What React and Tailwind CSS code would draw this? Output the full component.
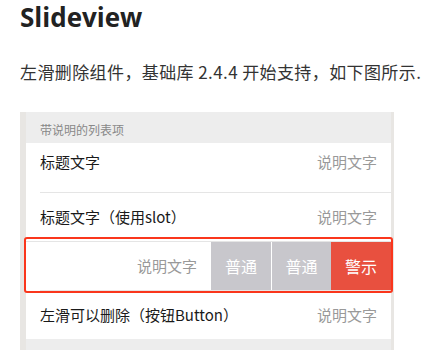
// App.jsx — Slideview doc snippet with a swiped list row
const CJK = "font-['Noto_Sans_CJK_SC','Noto_Sans',sans-serif]";

function Row({ title, desc, first = false }) {
  return (
    <div
      className={`flex h-[49px] items-center justify-between pr-[14px] ${
        first ? "pb-[11px] pl-[14px]" : "ml-[14px] border-t border-[#e5e5e5]"
      }`}
    >
      <span className="text-[15px] leading-[20px] text-[#1a1a1a]">{title}</span>
      <span className="text-[15px] leading-[20px] text-[#999]">{desc}</span>
    </div>
  );
}

function SwipedRow() {
  return (
    <div className="relative flex h-[49px] border-t border-[#e5e5e5]">
      <div className="flex flex-1 items-center justify-end pr-[14px]">
        <span className="text-[15px] leading-[20px] text-[#999]">说明文字</span>
      </div>
      <div className="flex h-full">
        <div className="flex w-[60px] items-center justify-center bg-[#c8c7cc] text-[16px] text-white">
          普通
        </div>
        <div className="ml-px flex w-[59px] items-center justify-center bg-[#c8c7cc] text-[16px] text-white">
          普通
        </div>
        <div className="flex w-[60px] items-center justify-center bg-[#e8503f] text-[16px] text-white">
          警示
        </div>
      </div>
      {/* annotation outline */}
      <div className="pointer-events-none absolute -top-[5px] -bottom-[3px] -left-[2px] -right-[2px] rounded-[3px] border-2 border-[#fa361c]" />
    </div>
  );
}

export default function App() {
  return (
    <div className={`h-[350px] w-[422px] overflow-hidden bg-white ${CJK}`}>
      <div className="pl-5">
        <h1 className="font-['Open_Sans',sans-serif] text-[26px] font-bold leading-[34px] text-[#222]">
          Slideview
        </h1>
        <p className="mt-[26px] whitespace-nowrap text-[17px] leading-[24px] tracking-[0.4px] text-[#333]">
          左滑删除组件，基础库 2.4.4 开始支持，如下图所示.
        </p>

        <div className="mt-[28px] w-[374px] bg-[#e8e6e3] pl-[6px] pr-[3px]">
          <div className="flex h-[31px] items-center bg-[#ededed] px-[14px] pt-[4px] text-[12px] text-[#888]">
            带说明的列表项
          </div>
          <div className="bg-white">
            <Row first title="标题文字" desc="说明文字" />
            <Row title="标题文字（使用slot）" desc="说明文字" />
            <SwipedRow />
            <Row title="左滑可以删除（按钮Button）" desc="说明文字" />
          </div>
          <div className="h-[30px] bg-[#ededed]" />
        </div>
      </div>
    </div>
  );
}
